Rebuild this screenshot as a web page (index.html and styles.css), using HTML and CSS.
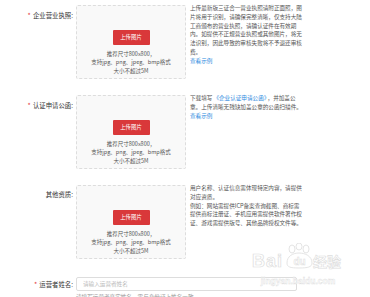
FILE: index.html
```html
<!DOCTYPE html>
<html lang="zh-CN">
<head>
    <meta charset="UTF-8">
    <meta name="viewport" content="width=device-width, initial-scale=1.0">
    <title>企业认证资料</title>
    <link rel="stylesheet" href="styles.css">
</head>
<body>
    <div class="form">
        <!-- 营业执照 -->
        <div class="row">
            <div class="label"><span class="req">*</span>企业营业执照:</div>
            <div class="upload">
                <button class="btn">上传图片</button>
                <p class="hint">推荐尺寸800x800，<br>支持jpg、png、jpeg、bmp格式<br>大小不超过5M</p>
            </div>
            <div class="desc">上传最新版三证合一营业执照请附正面照，图片将用于识别，请确保完整清晰，仅支持大陆工商颁布的营业执照，请确认证件在有效期内。如提供不正规营业执照或其他图片，将无法识别，因此导致的审核失败将不予退还审核费。<br><a class="link" href="#">查看示例</a></div>
        </div>

        <!-- 认证申请公函 -->
        <div class="row">
            <div class="label"><span class="req">*</span>认证申请公函:</div>
            <div class="upload">
                <button class="btn">上传图片</button>
                <p class="hint">推荐尺寸800x800，<br>支持jpg、png、jpeg、bmp格式<br>大小不超过5M</p>
            </div>
            <div class="desc">下载填写<a class="link doc" href="#">《企业认证申请公函》</a>，并加盖公章。上传清晰无残缺加盖公章的公函扫描件。<br><a class="link" href="#">查看示例</a></div>
        </div>

        <!-- 其他资质 -->
        <div class="row">
            <div class="label">其他资质:</div>
            <div class="upload">
                <button class="btn">上传图片</button>
                <p class="hint">推荐尺寸800x800，<br>支持jpg、png、jpeg、bmp格式<br>大小不超过5M</p>
            </div>
            <div class="desc">用户名称、认证信息需体现特定内容，请提供对应资质。<br>例如：网站需提供ICP备案查询截图、商标需提供商标注册证、手机应用需提供软件著作权证、游戏需提供版号、其他品牌授权文件等。</div>
        </div>

        <!-- 运营者姓名 -->
        <div class="row row-input">
            <div class="label"><span class="req">*</span>运营者姓名:</div>
            <div class="field">
                <input class="input" type="text" placeholder="请输入运营者姓名">
                <p class="note">请填写运营者真实姓名，需与身份证上姓名一致</p>
            </div>
        </div>
    </div>

    <!-- 水印 -->
    <div class="watermark">
        <div class="wm-top">
            <span class="wm-bai">Bai</span>
            <svg class="wm-paw" width="34" height="26" viewBox="0 0 34 26">
                <g fill="#fff" stroke="#ddd" stroke-width="0.8">
                    <ellipse cx="9" cy="6" rx="3" ry="4"/>
                    <ellipse cx="16" cy="3.5" rx="3" ry="3.5"/>
                    <ellipse cx="23" cy="6" rx="3" ry="4"/>
                    <path d="M4 20 C4 13 10 10 16 10 C22 10 29 13 29 20 C29 24 25 25 16 25 C7 25 4 24 4 20 Z"/>
                </g>
                <text x="16.5" y="22" text-anchor="middle" font-family="Liberation Sans, sans-serif" font-size="10" font-weight="bold" fill="#fff" stroke="#ddd" stroke-width="0.5">du</text>
            </svg>
            <span class="wm-cn">经验</span>
        </div>
        <div class="wm-url">jingyan.baidu.com</div>
    </div>
</body>
</html>
```

FILE: styles.css
```css
body {
    margin: 0;
    background: #fff;
    font-family: "Noto Sans CJK SC", "Noto Sans", sans-serif;
    color: #333;
    overflow: hidden;
}
.form {
    padding-top: 5px;
}
.row {
    display: flex;
    align-items: flex-start;
    margin-bottom: 16px;
}
.label {
    width: 73px;
    margin-right: 3px;
    padding-top: 5px;
    font-size: 6.4px;
    line-height: 10px;
    text-align: right;
    color: #333;
    white-space: nowrap;
}
.req {
    color: #e4393c;
    font-size: 7px;
    margin-right: 2px;
}
.upload {
    box-sizing: border-box;
    width: 110px;
    height: 74px;
    padding-top: 14px;
    border: 1px dashed #ddd;
    border-radius: 2px;
    background: #f9f9f9;
    text-align: center;
}
.btn {
    width: 37px;
    height: 15px;
    padding: 0;
    border: none;
    border-radius: 1px;
    background: #d9383a;
    color: #fff;
    font-family: inherit;
    font-size: 5.4px;
    cursor: pointer;
}
.hint {
    margin: 5px 0 0;
    font-size: 5.5px;
    line-height: 8.6px;
    color: #555;
}
.desc {
    width: 113px;
    margin-left: 4px;
    margin-top: -1px;
    font-size: 5.6px;
    line-height: 8.8px;
    color: #555;
}
.link {
    color: #2d8ae0;
    text-decoration: none;
}
.doc {
    margin: 0 1px;
}
.row-input {
    margin-top: 18px;
}
.row-input .label {
    padding-top: 2px;
}
.field {
    width: 221px;
}
.input {
    box-sizing: border-box;
    display: block;
    width: 221px;
    height: 14px;
    padding: 0 6px;
    border: 1px solid #ddd;
    border-radius: 2px;
    font-family: inherit;
    font-size: 5.6px;
    color: #333;
    outline: none;
}
.input::placeholder {
    color: #bbb;
}
.note {
    margin: 2px 0 0;
    font-size: 5.6px;
    line-height: 8px;
    color: #999;
}

/* 水印 */
.watermark {
    position: absolute;
    left: 252px;
    top: 243px;
    width: 92px;
}
.wm-top {
    display: flex;
    align-items: flex-end;
    height: 26px;
}
.wm-bai {
    font-family: "Liberation Sans", sans-serif;
    font-weight: bold;
    font-size: 18px;
    line-height: 16px;
    color: #fff;
    -webkit-text-stroke: 0.7px #ddd;
    letter-spacing: 1px;
}
.wm-paw {
    display: block;
}
.wm-cn {
    font-size: 14px;
    line-height: 16px;
    font-weight: bold;
    color: #fff;
    -webkit-text-stroke: 0.6px #ddd;
    margin-left: -4px;
}
.wm-url {
    margin-top: 8px;
    font-family: "Liberation Sans", sans-serif;
    font-weight: bold;
    font-size: 8.5px;
    line-height: 8px;
    color: #fff;
    -webkit-text-stroke: 0.4px #ddd;
    text-align: center;
}
```
